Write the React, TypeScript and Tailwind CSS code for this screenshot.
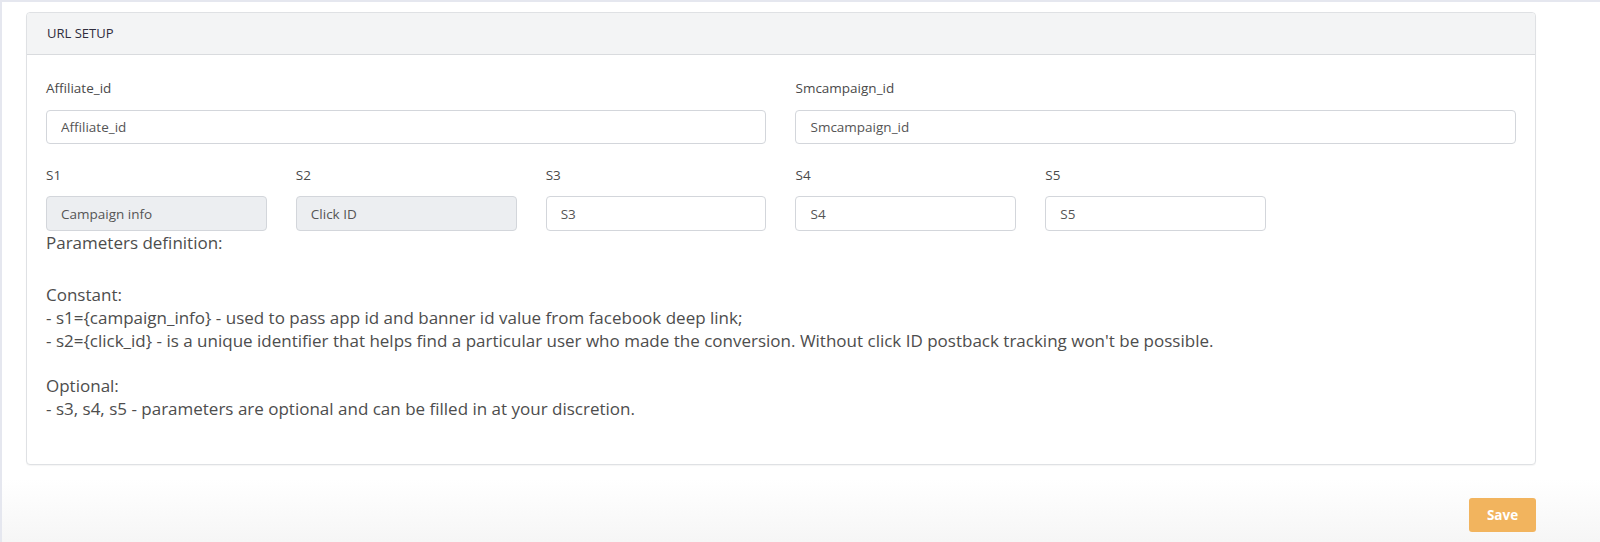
export default function App() {
  const sFields = [
    { label: 'S1', value: 'Campaign info', disabled: true },
    { label: 'S2', value: 'Click ID', disabled: true },
    { label: 'S3', value: 'S3', disabled: false },
    { label: 'S4', value: 'S4', disabled: false },
    { label: 'S5', value: 'S5', disabled: false },
  ];

  return (
    <div
      className="h-[542px] overflow-hidden bg-white border-t-2 border-l-2 border-[#e5e7ef] text-[#505050]"
      style={{ fontFamily: '"Open Sans", "Liberation Sans", Arial, sans-serif' }}
    >
      <div className="pl-[24px] pr-[64px] pt-[10px]">
        <div className="border border-[#dfe1e4] rounded-[4px] bg-white shadow-[0_1px_1px_rgba(0,0,0,0.04)]">
          <div className="h-[42px] bg-[#f3f4f5] border-b border-[#d9dbde] rounded-t-[4px] flex items-center px-[20px] text-[13px] text-[#2f2d3d]">
            URL SETUP
          </div>

          <div className="px-[19px] pt-[24px] pb-[44px]">
            <div className="grid grid-cols-6 gap-x-[29px]">
              <div className="col-span-3">
                <label className="block text-[13.5px] leading-[18px] mb-[13px] text-[#4a4a4a]">Affiliate_id</label>
                <input
                  type="text"
                  placeholder="Affiliate_id"
                  className="w-full h-[34px] border border-[#d3d6db] rounded-[4px] px-[14px] text-[13.5px] text-[#555] placeholder-[#555] outline-none"
                />
              </div>
              <div className="col-span-3">
                <label className="block text-[13.5px] leading-[18px] mb-[13px] text-[#4a4a4a]">Smcampaign_id</label>
                <input
                  type="text"
                  placeholder="Smcampaign_id"
                  className="w-full h-[34px] border border-[#d3d6db] rounded-[4px] px-[14px] text-[13.5px] text-[#555] placeholder-[#555] outline-none"
                />
              </div>

              {sFields.map((f) => (
                <div key={f.label} className="mt-[22px]">
                  <label className="block text-[13.5px] leading-[18px] mb-[12px] text-[#4a4a4a]">{f.label}</label>
                  <input
                    type="text"
                    placeholder={f.value}
                    disabled={f.disabled}
                    className={
                      f.disabled
                        ? 'w-full h-[35px] border border-[#d3d6db] rounded-[4px] px-[14px] text-[13.5px] bg-[#eceef1] placeholder-[#555] outline-none'
                        : 'w-full h-[35px] border border-[#d3d6db] rounded-[4px] px-[14px] text-[13.5px] bg-white placeholder-[#555] outline-none'
                    }
                  />
                </div>
              ))}
            </div>

            <div className="text-[17px] leading-[23px] text-[#4d4d4d]">
              <p>Parameters definition:</p>
              <div className="mt-[29px]">
                <p>Constant:</p>
                <p>- s1={'{campaign_info}'} - used to pass app id and banner id value from facebook deep link;</p>
                <p>
                  - s2={'{click_id}'} - is a unique identifier that helps find a particular user who made the conversion. Without
                  click ID postback tracking won't be possible.
                </p>
              </div>
              <div className="mt-[22px]">
                <p>Optional:</p>
                <p>- s3, s4, s5 - parameters are optional and can be filled in at your discretion.</p>
              </div>
            </div>
          </div>
        </div>
      </div>

      <div className="mt-[14px] h-[70px] bg-gradient-to-b from-white to-[#f5f5f5] pt-[19px] pr-[64px] flex justify-end items-start">
        <button className="w-[67px] h-[34px] bg-[#f2b45e] rounded-[3px] text-white text-[13.5px] font-bold">
          Save
        </button>
      </div>
    </div>
  );
}
